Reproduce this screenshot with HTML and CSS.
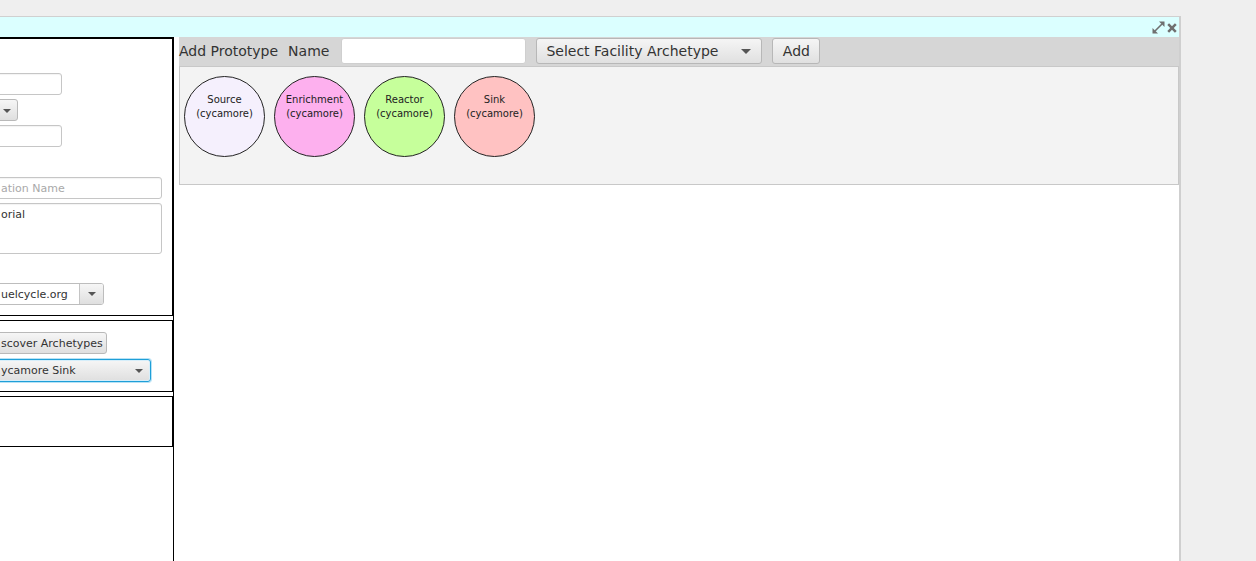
FILE: index.html
```html
<!DOCTYPE html>
<html>
<head>
<meta charset="utf-8">
<link rel="stylesheet" href="styles.css">
</head>
<body>
<div class="window">
  <div class="titlebar">
    <svg class="ico-expand" width="13" height="13" viewBox="0 0 13 13">
      <polygon points="7,0.5 12.5,0.5 12.5,6" fill="#6f6f6f"/>
      <polygon points="0.5,7 0.5,12.5 6,12.5" fill="#6f6f6f"/>
      <line x1="3" y1="10" x2="10" y2="3" stroke="#6f6f6f" stroke-width="1.6"/>
    </svg>
    <svg class="ico-close" width="10" height="10" viewBox="0 0 10 10">
      <line x1="1.2" y1="1.2" x2="8.8" y2="8.8" stroke="#6f6f6f" stroke-width="2.5"/>
      <line x1="8.8" y1="1.2" x2="1.2" y2="8.8" stroke="#6f6f6f" stroke-width="2.5"/>
    </svg>
  </div>
  <div class="main">
    <div class="left">
      <div class="box box1">
        <div class="tf w62 first"></div>
        <div class="btn combo-mini w18 gap4"><span class="arrow"></span></div>
        <div class="tf w62 gap4"></div>
        <div class="tf w162 gap30 prompt">ation Name</div>
        <div class="ta w162 gap4">orial</div>
        <div class="ecombo gap29">
          <div class="ecombo-field">uelcycle.org</div>
          <div class="ecombo-btn"><span class="arrow"></span></div>
        </div>
      </div>
      <div class="box box2">
        <div class="btn w107 first2">scover Archetypes</div>
        <div class="btn combo focused w151 gap5"><span class="combo-label">ycamore Sink</span><span class="arrow"></span></div>
      </div>
      <div class="box box3"></div>
    </div>
    <div class="right">
      <div class="toolbar">
        <span class="tlabel">Add Prototype</span>
        <span class="tlabel name">Name</span>
        <div class="tfield"></div>
        <div class="tcombo"><span>Select Facility Archetype</span><span class="arrow"></span></div>
        <div class="tbtn">Add</div>
      </div>
      <div class="canvas">
        <div class="node source"><span>Source</span><span>(cycamore)</span></div>
        <div class="node enrich"><span>Enrichment</span><span>(cycamore)</span></div>
        <div class="node reactor"><span>Reactor</span><span>(cycamore)</span></div>
        <div class="node sink"><span>Sink</span><span>(cycamore)</span></div>
      </div>
    </div>
  </div>
</div>
</body>
</html>
```

FILE: styles.css
```css
* { box-sizing: border-box; }
html, body { margin: 0; padding: 0; }
body {
  background: #efefef;
  font-family: "DejaVu Sans", "Noto Sans", sans-serif;
  color: #333;
  height: 561px;
  overflow: hidden;
}
.window {
  margin-top: 16px;
  width: 1181px;
  height: 545px;
  border-top: 1px solid #d0d0d0;
  border-right: 2px solid #cfcfcf;
  background: #fff;
  display: flex;
  flex-direction: column;
}
.titlebar {
  height: 20px;
  background: #dbffff;
  display: flex;
  justify-content: flex-end;
  align-items: center;
  padding-right: 2px;
  gap: 2px;
}
.ico-expand { margin-top: 1px; }
.ico-close { margin-top: 2px; }
.main {
  flex: 1;
  display: flex;
  background: #fff;
}
.left {
  width: 174px;
  border-right: 1px solid #000;
  overflow: hidden;
  display: flex;
  flex-direction: column;
  gap: 4px;
  font-size: 11px;
}
.box {
  border-top: 1px solid #000;
  border-bottom: 1px solid #000;
  border-right: 1px solid #000;
  display: flex;
  flex-direction: column;
  align-items: flex-start;
  flex-shrink: 0;
}
.box1 { height: 279px; border-top-width: 2px; }
.box2 { height: 72px; }
.box3 { height: 51px; }

.first { margin-top: 34px; }
.first2 { margin-top: 11px; }
.gap4 { margin-top: 4px; }
.gap5 { margin-top: 5px; }
.gap29 { margin-top: 29px; }
.gap30 { margin-top: 30px; }

.tf, .ta {
  margin-left: -10px;
  height: 22px;
  border: 1px solid #c6c6c6;
  border-radius: 3px;
  background: #fff;
  box-shadow: inset 0 1px 1px rgba(0,0,0,0.05);
  padding-left: 10px;
  padding-top: 1px;
  line-height: 20px;
  white-space: nowrap;
  color: #333;
}
.ta { height: 51px; line-height: 14px; padding-top: 4px; }
.prompt { color: #a9a9a9; }
.w62 { width: 72px; }
.w162 { width: 172px; }
.w18 { width: 28px; }
.w107 { width: 117px; }
.w151 { width: 161px; }

.btn {
  margin-left: -10px;
  height: 22px;
  border: 1px solid #b9b9b9;
  border-radius: 3px;
  background: linear-gradient(to bottom, #f6f6f6, #dfdfdf);
  padding-left: 10px;
  padding-top: 1px;
  line-height: 20px;
  white-space: nowrap;
  color: #333;
  display: flex;
  align-items: center;
}
.combo-mini { justify-content: flex-end; padding-right: 6px; }
.combo { height: 23px; justify-content: space-between; padding-right: 7px; }
.focused {
  border-color: #1e9fd8;
  box-shadow: 0 0 0 1px #b8e2f5, inset 0 0 0 1px #d6eefa;
}
.arrow {
  display: inline-block;
  width: 0; height: 0;
  border-left: 4px solid transparent;
  border-right: 4px solid transparent;
  border-top: 4px solid #555;
}

.ecombo {
  margin-left: -10px;
  width: 114px;
  height: 22px;
  display: flex;
  border: 1px solid #bdbdbd;
  border-radius: 3px;
  overflow: hidden;
}
.ecombo-field {
  flex: 1;
  background: #fff;
  padding-left: 10px;
  padding-top: 1px;
  line-height: 20px;
  white-space: nowrap;
  color: #333;
}
.ecombo-btn {
  width: 24px;
  border-left: 1px solid #c4c4c4;
  background: linear-gradient(to bottom, #f6f6f6, #dfdfdf);
  display: flex;
  align-items: center;
  justify-content: center;
}

.right {
  margin-left: 5px;
  width: 1000px;
  display: flex;
  flex-direction: column;
}
.toolbar {
  height: 29px;
  background: #d6d6d6;
  display: flex;
  align-items: flex-start;
  padding-top: 1px;
  gap: 10px;
  font-size: 14px;
}
.tlabel { line-height: 26px; color: #333; white-space: nowrap; }
.name { margin-right: 2px; }
.tfield {
  width: 185px;
  height: 26px;
  background: #fff;
  border-radius: 3px;
  border: 1px solid #cfcfcf;
}
.tcombo {
  width: 226px;
  height: 26px;
  border: 1px solid #b7b7b7;
  border-radius: 3px;
  background: linear-gradient(to bottom, #f5f5f5, #e0e0e0);
  display: flex;
  align-items: center;
  justify-content: space-between;
  padding: 0 10px 0 9px;
  color: #333;
  white-space: nowrap;
}
.tcombo .arrow { border-left-width: 5px; border-right-width: 5px; border-top-width: 5px; }
.tbtn {
  width: 48px;
  height: 26px;
  border: 1px solid #b7b7b7;
  border-radius: 3px;
  background: linear-gradient(to bottom, #f5f5f5, #e0e0e0);
  display: flex;
  align-items: center;
  justify-content: center;
  color: #333;
}
.canvas {
  height: 119px;
  background: #f3f3f3;
  border: 1px solid #c8c8c8;
  padding: 9px 4px;
  display: flex;
  gap: 9px;
  align-items: flex-start;
}
.node {
  width: 81px;
  height: 81px;
  border: 1px solid #222;
  border-radius: 50%;
  display: flex;
  flex-direction: column;
  align-items: center;
  padding-top: 16px;
  font-size: 10px;
  line-height: 14px;
  color: #222;
}
.source { background: #f5f0fd; }
.enrich { background: #fdb0ee; }
.reactor { background: #c6ff9b; }
.sink { background: #ffc2c2; }
```
